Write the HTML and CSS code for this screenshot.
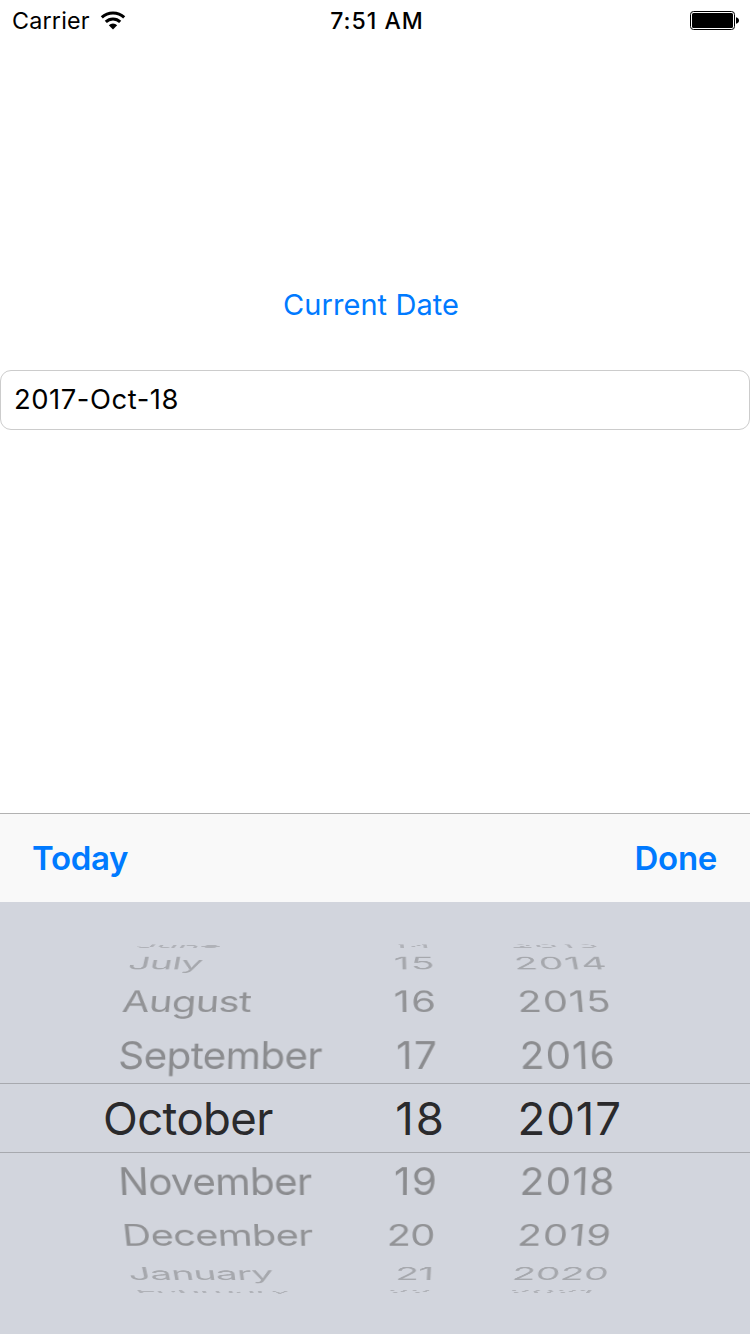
FILE: index.html
```html
<!DOCTYPE html>
<html lang="en">
<head>
<meta charset="utf-8">
<title>Date Picker</title>
<link rel="stylesheet" href="styles.css">
</head>
<body>
<main class="screen">
  <header class="status">
    <div class="status-left">
      <span class="carrier">Carrier</span>
      <svg class="wifi" width="26" height="20" viewBox="0 0 26 20">
        <path d="M1.8 6.4A16.2 16.2 0 0 1 24.2 6.4" fill="none" stroke="#000" stroke-width="3"/>
        <path d="M5.8 10.9A10.3 10.3 0 0 1 20.2 10.9" fill="none" stroke="#000" stroke-width="3"/>
        <path d="M13 18.5L8.8 14.3A6 6 0 0 1 17.2 14.3Z"/>
      </svg>
    </div>
    <span class="time">7:51 AM</span>
    <svg class="battery" width="50" height="20" viewBox="0 0 50 20">
      <rect x=".5" y=".5" width="44" height="18" rx="3" fill="none" stroke="#000"/>
      <rect x="2" y="2" width="41" height="15" rx="1.5"/>
      <path d="M46 6.2Q49 7 49 9.5T46 12.8Z"/>
    </svg>
  </header>
  <section class="form">
    <button class="current">Current Date</button>
    <div class="field">2017-Oct-18</div>
  </section>
  <nav class="toolbar"><button>Today</button><button class="done">Done</button></nav>
  <section class="picker">
    <div class="drum">
      <div class="row up4"><span>June</span><span class="day teen">14</span><span class="year">2013</span></div>
      <div class="row up3"><span>July</span><span class="day teen">15</span><span class="year">2014</span></div>
      <div class="row up2"><span>August</span><span class="day teen">16</span><span class="year">2015</span></div>
      <div class="row up1"><span>September</span><span class="day teen">17</span><span class="year">2016</span></div>
      <div class="row down1"><span>November</span><span class="day teen">19</span><span class="year">2018</span></div>
      <div class="row down2"><span>December</span><span class="day">20</span><span class="year">2019</span></div>
      <div class="row down3"><span>January</span><span class="day">21</span><span class="year twenties">2020</span></div>
      <div class="row down4"><span>February</span><span class="day">22</span><span class="year twenties">2021</span></div>
    </div>
    <div class="selected"><span>October</span><span class="day">18</span><span class="year">2017</span></div>
  </section>
</main>
</body>
</html>
```
FILE: styles.css
```css
* { box-sizing: border-box; }
body { margin: 0; font-family: Inter, "Liberation Sans", sans-serif; background: #fff; color: #000; }
button { border: 0; padding: 0; background: none; font: inherit; color: #007aff; }
svg { display: block; }
.screen { width: 750px; height: 1334px; display: flex; flex-direction: column; overflow: hidden; }

.status { height: 42px; display: grid; grid-template-columns: 1fr auto 1fr; align-items: center; padding: 0 10px 0 12px; font-size: 23.3px; line-height: 42px; }
.status-left { display: flex; align-items: center; gap: 10px; }
.carrier { letter-spacing: 0.2px; }
.time { font-weight: 550; font-size: 23px; letter-spacing: 1px; margin-left: 2px; }
.battery { justify-self: end; }

.form { flex: 1; display: flex; flex-direction: column; align-items: center; padding-top: 243px; }
.current { font-size: 29px; line-height: 40px; height: 40px; margin-right: 8px; letter-spacing: 0.08px; }
.field { align-self: stretch; height: 60px; margin-top: 45px; padding-left: 13px; border: 1px solid #ccc; border-radius: 11px; font-size: 27.4px; line-height: 57px; letter-spacing: 0.55px; }

.toolbar { height: 89px; border-top: 1px solid #b2b2b2; background: #f9f9f9; display: flex; justify-content: space-between; align-items: center; padding: 0 33px 0 32px; }
.toolbar button { font-size: 33px; font-weight: 600; line-height: 88px; letter-spacing: -0.3px; }

.picker { height: 432px; background: #d2d5dd; display: grid; align-items: center; }
.picker > * { grid-area: 1 / 1; }
.drum { height: 354px; margin-top: 2px; overflow: hidden; display: grid; align-items: center; perspective: 1970px; perspective-origin: 50% 50%; }
.row { grid-area: 1 / 1; height: 50px; line-height: 50px; font-size: 40.7px; display: grid; grid-template-columns: 200px 119px 1fr; padding-left: 117px; transform-origin: 375px 25px; letter-spacing: -0.7px; white-space: nowrap; }
.day { justify-self: end; }
.row .day { letter-spacing: -0.8px; }
.row .teen { letter-spacing: 1.3px; margin-right: -2.5px; }
.row .year { margin-left: 84.5px; letter-spacing: 1.1px; }
.row .twenties { margin-left: 82.5px; letter-spacing: 0; }
.up1, .down1 { color: #8b8c8f; }
.up2, .down2 { color: #929396; }
.up3, .down3 { color: #a6a8ad; }
.up4, .down4 { color: #b0b2b8; }
.up1 { transform: translateZ(-190px) rotateX(19.5deg) translateZ(190px); }
.up2 { transform: translateZ(-190px) rotateX(39deg) translateZ(190px); }
.up3 { transform: translateZ(-190px) rotateX(59deg) translateZ(190px); }
.up4 { transform: translateZ(-190px) rotateX(78.5deg) translateZ(190px); }
.down1 { transform: translateZ(-190px) rotateX(-19.5deg) translateZ(190px); }
.down2 { transform: translateZ(-190px) rotateX(-38.8deg) translateZ(190px); }
.down3 { transform: translateZ(-190px) rotateX(-58.5deg) translateZ(190px); }
.down4 { transform: translateZ(-190px) rotateX(-78deg) translateZ(190px); }

.selected { height: 70px; border: solid #a7a9ae; border-width: 1px 0; line-height: 69px; font-size: 45.5px; color: #2a2a2c; display: grid; grid-template-columns: 240px 103px 1fr; padding-left: 103px; letter-spacing: -0.6px; }
.selected .day { letter-spacing: 2px; }
.selected .year { margin-left: 71.5px; letter-spacing: 0.9px; }
```
